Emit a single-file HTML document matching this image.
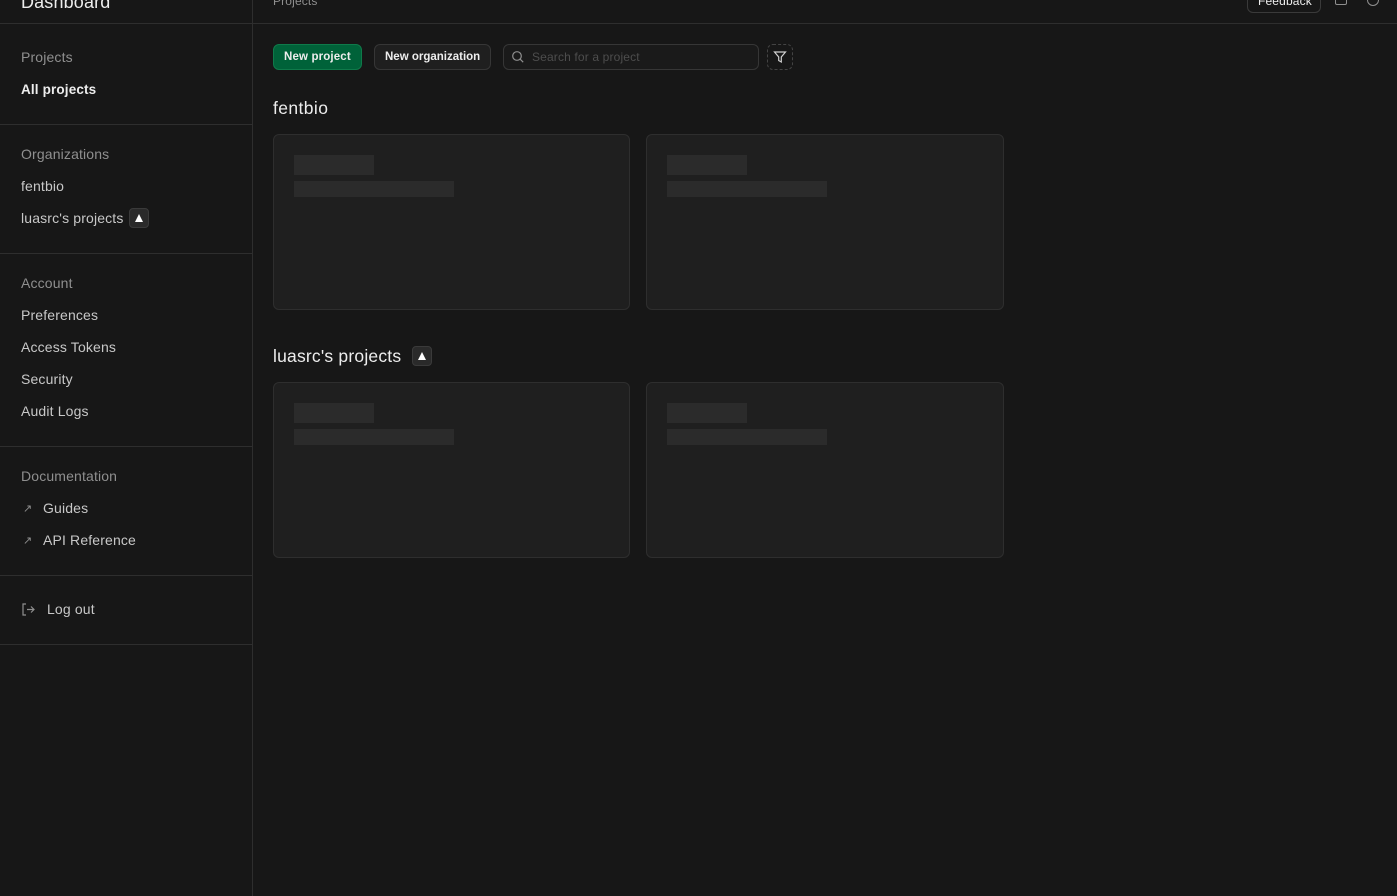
<!DOCTYPE html>
<html><head><meta charset="utf-8"><style>
*{box-sizing:border-box;margin:0;padding:0}
body{width:1397px;height:896px;background:#171717;font-family:"Liberation Sans",sans-serif;color:#ededed;position:relative;overflow:hidden}
.abs{position:absolute}
.side{left:0;top:0;width:253px;height:896px;border-right:1px solid #2e2e2e}
.hr{position:absolute;left:0;height:1px;background:#2e2e2e}
.t{position:absolute;font-size:14px;white-space:nowrap;letter-spacing:0.15px}
.g{color:#8f8f8f}
.w{color:#ededed}
.l{color:#c8c8c8}
.card{position:absolute;width:357px;height:176px;background:#1f1f1f;border:1px solid #2e2e2e;border-radius:6px}
.s1{position:absolute;left:20px;top:20px;width:80px;height:20px;background:#2b2b2b}
.s2{position:absolute;left:20px;top:46px;width:160px;height:16px;background:#2b2b2b}
.tri{display:inline-block;width:20px;height:20px;background:#2a2a2a;border:1px solid #3a3a3a;border-radius:4px;position:absolute}
.tri:after{content:"";position:absolute;left:5px;top:5px;border-left:4.5px solid transparent;border-right:4.5px solid transparent;border-bottom:8px solid #fff}
.b{font-weight:bold;font-size:11.5px}
</style></head><body>
<div class="abs side"></div>
<div class="hr" style="top:23px;width:1397px"></div>
<div class="t w" style="left:21px;top:-8px;font-size:18px">Dashboard</div>
<div class="t g" style="left:273px;top:-6px;font-size:12px">Projects</div>
<div class="abs" style="left:1247px;top:-10px;width:74px;height:23px;border:1px solid #3a3a3a;border-radius:6px"></div>
<div class="t w" style="left:1258px;top:-6px;font-size:12px">Feedback</div>
<div class="abs" style="left:1335px;top:-4px;width:12px;height:9px;border:1px solid #8f8f8f;border-radius:2px"></div>
<div class="abs" style="left:1367px;top:-6px;width:12px;height:12px;border:1px solid #8f8f8f;border-radius:50%"></div>

<div class="t g" style="left:21px;top:49px">Projects</div>
<div class="t w" style="left:21px;top:82px;font-weight:bold;font-size:13.5px">All projects</div>
<div class="hr" style="top:124px;width:253px"></div>
<div class="t g" style="left:21px;top:146px">Organizations</div>
<div class="t l" style="left:21px;top:178px">fentbio</div>
<div class="t l" style="left:21px;top:210px">luasrc's projects</div>
<div class="tri" style="left:129px;top:208px"></div>
<div class="hr" style="top:253px;width:253px"></div>
<div class="t g" style="left:21px;top:275px">Account</div>
<div class="t l" style="left:21px;top:307px">Preferences</div>
<div class="t l" style="left:21px;top:339px">Access Tokens</div>
<div class="t l" style="left:21px;top:371px">Security</div>
<div class="t l" style="left:21px;top:403px">Audit Logs</div>
<div class="hr" style="top:446px;width:253px"></div>
<div class="t g" style="left:21px;top:468px">Documentation</div>
<div class="t g" style="left:23px;top:502px;font-size:11px">↗</div>
<div class="t l" style="left:43px;top:500px">Guides</div>
<div class="t g" style="left:23px;top:534px;font-size:11px">↗</div>
<div class="t l" style="left:43px;top:532px">API Reference</div>
<div class="hr" style="top:575px;width:253px"></div>
<svg class="abs" style="left:21px;top:602px" width="15" height="15" viewBox="0 0 15 15" fill="none" stroke="#8f8f8f" stroke-width="1.2"><path d="M5 2H2v11h3M6 7.5h7M10 4.5l3 3-3 3"/></svg>
<div class="t l" style="left:47px;top:601px">Log out</div>
<div class="hr" style="top:644px;width:253px"></div>

<div class="abs" style="left:273px;top:44px;width:89px;height:26px;background:#006239;border:1px solid #0f7a4a;border-radius:6px"></div>
<div class="t w b" style="left:284px;top:51px">New project</div>
<div class="abs" style="left:374px;top:44px;width:117px;height:26px;background:#1f1f1f;border:1px solid #363636;border-radius:6px"></div>
<div class="t w b" style="left:385px;top:51px;letter-spacing:0">New organization</div>
<div class="abs" style="left:503px;top:44px;width:256px;height:26px;background:#1a1a1a;border:1px solid #363636;border-radius:6px"></div>
<svg class="abs" style="left:511px;top:50px" width="14" height="14" viewBox="0 0 14 14" fill="none" stroke="#8f8f8f" stroke-width="1.2"><circle cx="6" cy="6" r="4.3"/><path d="M9.2 9.2l3 3"/></svg>
<div class="t" style="left:532px;top:50px;font-size:12px;color:#4d4d4d">Search for a project</div>
<div class="abs" style="left:767px;top:44px;width:26px;height:26px;border:1px dashed #444;border-radius:6px"></div>
<svg class="abs" style="left:773px;top:50px" width="14" height="14" viewBox="0 0 14 14" fill="none" stroke="#cfcfcf" stroke-width="1.2"><path d="M1.5 2h11L8.3 7v5L5.7 10.5V7z"/></svg>

<div class="t w" style="left:273px;top:98px;font-size:17.5px;letter-spacing:0.4px">fentbio</div>
<div class="card" style="left:273px;top:134px"><div class="s1"></div><div class="s2"></div></div>
<div class="card" style="left:646px;top:134px;width:358px"><div class="s1"></div><div class="s2"></div></div>
<div class="t w" style="left:273px;top:346px;font-size:17.5px;letter-spacing:0.2px">luasrc's projects</div>
<div class="tri" style="left:412px;top:346px"></div>
<div class="card" style="left:273px;top:382px"><div class="s1"></div><div class="s2"></div></div>
<div class="card" style="left:646px;top:382px;width:358px"><div class="s1"></div><div class="s2"></div></div>
</body></html>
